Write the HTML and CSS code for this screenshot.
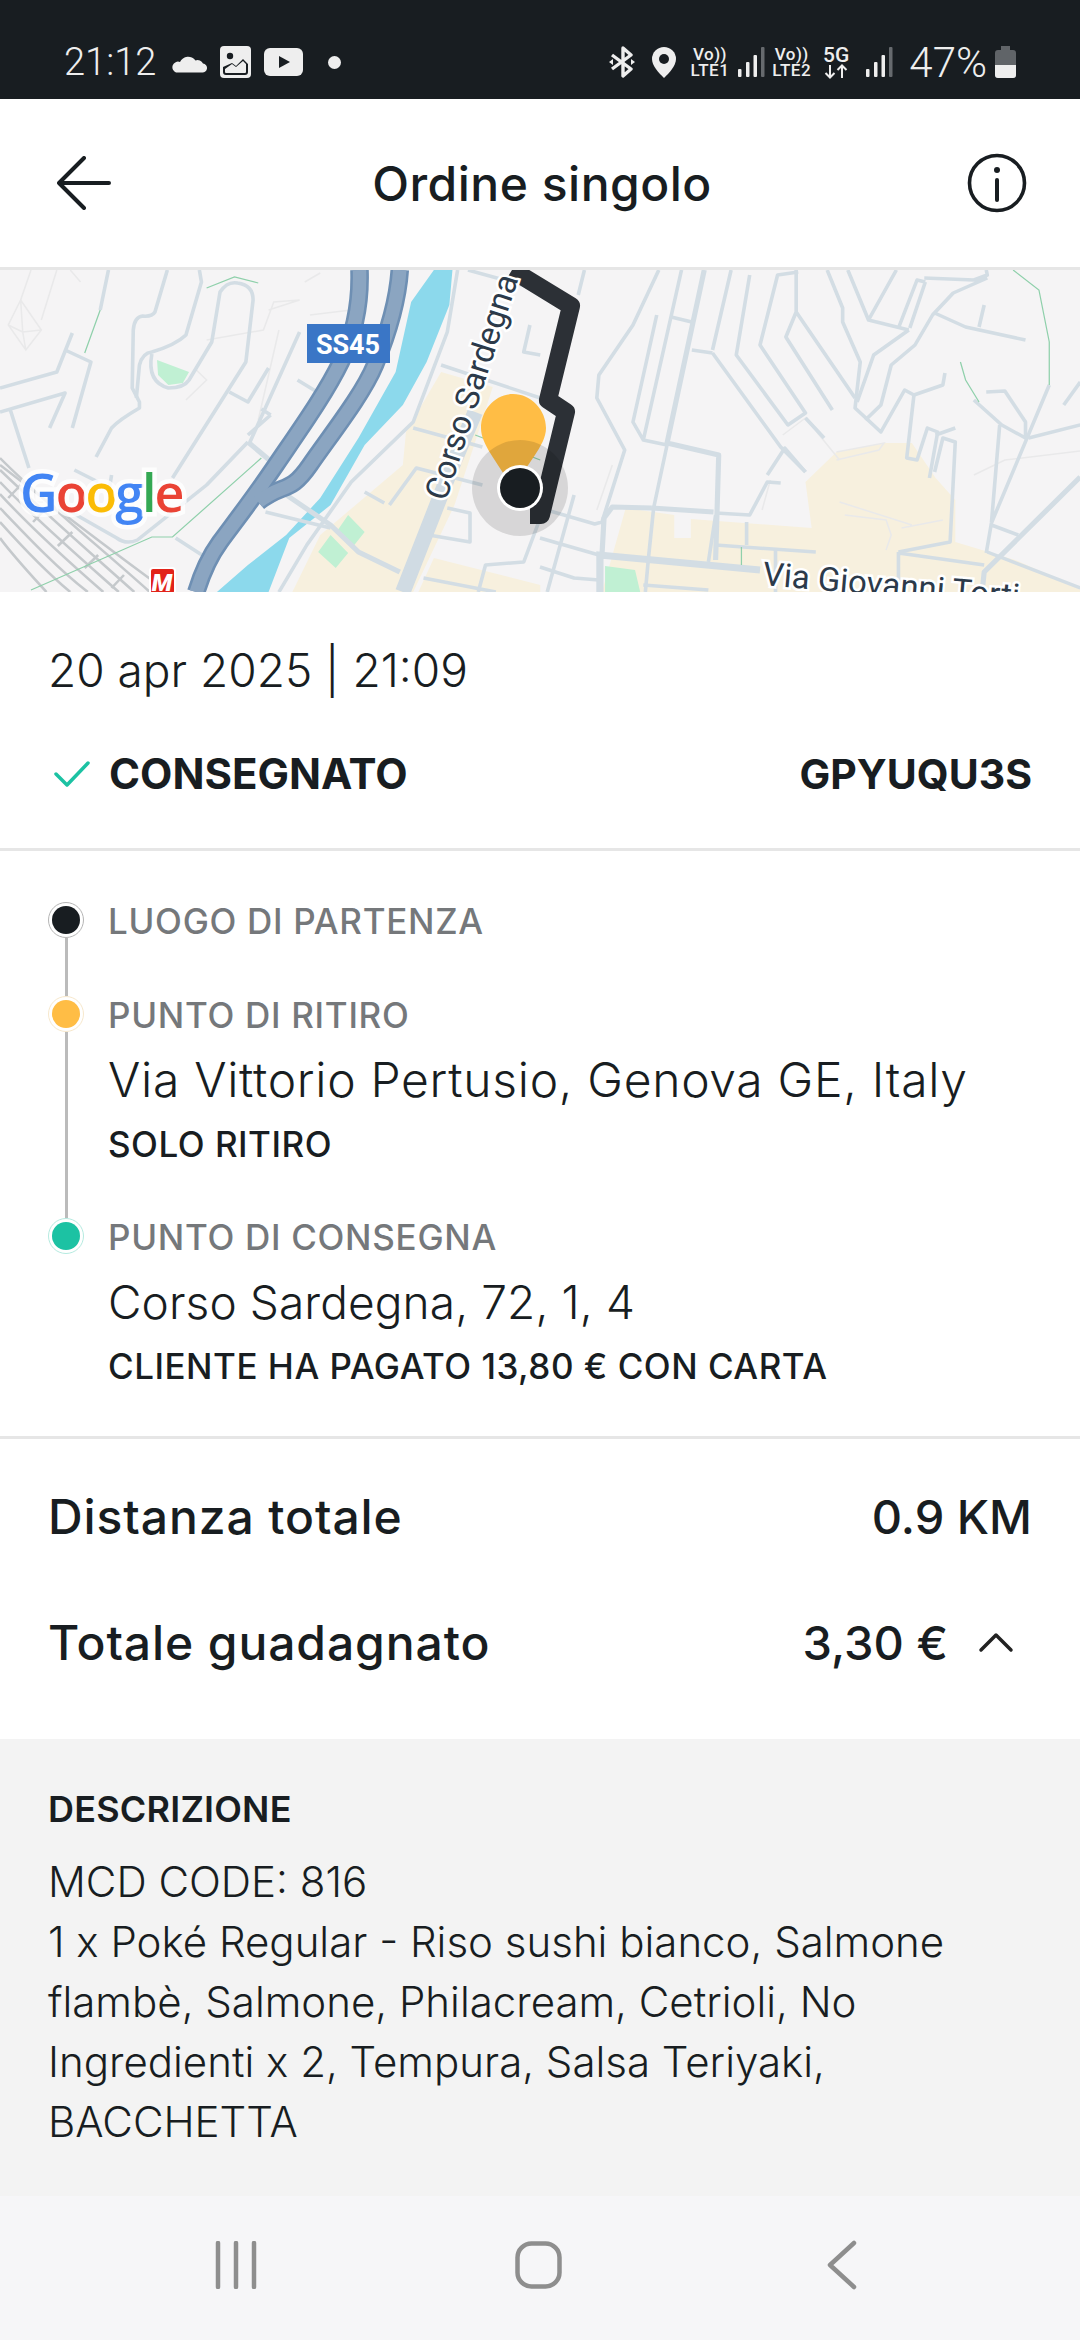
FILE: index.html
```html
<!DOCTYPE html>
<html lang="it">
<head>
<meta charset="UTF-8">
<meta name="viewport" content="width=device-width, initial-scale=1.0">
<title>Ordine singolo</title>
<link rel="stylesheet" href="styles.css">
</head>
<body>

<div class="status-bar">
  <div class="status-left">
    <span class="clock">21:12</span>
    <svg class="ic-cloud" width="37" height="22" viewBox="0 0 37 22"><path fill="#eee" d="M6 21.500H32a4.500 4.500 0 0 0 1-9 a6 6 0 0 0-7.500-3 a9 9 0 0 0-15.500 1.500 a5.500 5.500 0 0 0-4 10.500z"/></svg>
    <svg class="ic-image" width="31" height="32" viewBox="0 0 31 32"><rect width="31" height="32" rx="4" fill="#eee"/><circle cx="10" cy="10" r="3.200" fill="#181d21"/><path d="M3 21v5a3 3 0 0 0 3 3h19a3 3 0 0 0 3-3v-8l-5-5-7 7-4-3z" fill="#181d21"/><path d="M5 23l7-5 4 3 7-6 3 3v8a1 1 0 0 1-1 1H6a1 1 0 0 1-1-1z" fill="#eee"/></svg>
    <svg class="ic-yt" width="39" height="28" viewBox="0 0 39 28"><rect width="39" height="28" rx="6" fill="#eee"/><path d="M15 8l11 6-11 6z" fill="#181d21"/></svg>
    <span class="status-dot"></span>
  </div>
  <div class="status-right">
    <svg class="ic-bt" width="26" height="32" viewBox="0 0 26 32"><path d="M3 9l19 14-8 7V2l8 7L3 23" fill="none" stroke="#eee" stroke-width="3.400" stroke-linejoin="round"/><path d="M0 16l4-3v6zM26 16l-4-3v6z" fill="#eee"/></svg>
    <svg class="ic-loc" width="24" height="31" viewBox="0 0 24 31"><path d="M12 0a12 12 0 0 1 12 12c0 7-7 14-12 19C7 26 0 19 0 12A12 12 0 0 1 12 0z" fill="#eee"/><circle cx="12" cy="12" r="5" fill="#181d21"/></svg>
    <span class="volte"><span>Vo))</span><span>LTE1</span></span>
    <svg class="ic-signal" width="27" height="30" viewBox="0 0 27 30"><rect x="0" y="22" width="3.500" height="8" rx="1" fill="#eee"/><rect x="8" y="15" width="3.500" height="15" rx="1" fill="#eee"/><rect x="15.500" y="8" width="3.500" height="22" rx="1" fill="#eee"/><rect x="23" y="0" width="3.500" height="30" rx="1" fill="#666a6e"/></svg>
    <span class="volte volte-two"><span>Vo))</span><span>LTE2</span></span>
    <span class="volte five-g"><span>5G</span><svg width="24" height="15" viewBox="0 0 24 15"><path d="M6 1v12M1.500 9L6 13.500 10.500 9M18 14V2M13.500 6L18 1.500 22.500 6" fill="none" stroke="#eee" stroke-width="2"/></svg></span>
    <svg class="ic-signal ic-signal-two" width="27" height="30" viewBox="0 0 27 30"><rect x="0" y="22" width="3.500" height="8" rx="1" fill="#eee"/><rect x="8" y="15" width="3.500" height="15" rx="1" fill="#eee"/><rect x="15.500" y="8" width="3.500" height="22" rx="1" fill="#eee"/><rect x="23" y="0" width="3.500" height="30" rx="1" fill="#666a6e"/></svg>
    <span class="battery-text">47%</span>
    <svg class="ic-battery" width="21" height="32" viewBox="0 0 21 32"><path d="M6 0h9v4h3a3 3 0 0 1 3 3v22a3 3 0 0 1-3 3H3a3 3 0 0 1-3-3V7a3 3 0 0 1 3-3h3z" fill="#606468"/><path d="M0 19h21v10a3 3 0 0 1-3 3H3a3 3 0 0 1-3-3z" fill="#eee"/></svg>
  </div>
</div>

<header class="top-bar">
  <svg class="back" width="54" height="54" viewBox="0 0 54 54"><path d="M2 27h50M27 2L2 27l25 25" fill="none" stroke="#181d21" stroke-width="4" stroke-linecap="round" stroke-linejoin="round"/></svg>
  <h1>Ordine singolo</h1>
  <svg class="info" width="60" height="60" viewBox="0 0 60 60"><circle cx="30" cy="30" r="27.500" fill="none" stroke="#181d21" stroke-width="3.600"/><path d="M30 27v20" stroke="#181d21" stroke-width="4" stroke-linecap="round"/><circle cx="30" cy="17" r="3" fill="#181d21"/></svg>
</header>

<div class="map">
  <svg width="1080" height="322" viewBox="0 0 1080 322">
    <rect width="1080" height="322" fill="#f5f4f5"/>

    <!-- left half, coordinates taken from the crop -->
    <g transform="scale(1.033 1)">
      <path class="beige" d="M427 102L477 117 460 172 440 235 400 322H283L310 265 390 195 393 162zM420 288L523 315V322H405z"/>
      <path class="park" d="M152 90L183 102 177 113 163 115 153 105zM337 245L353 262 343 275 327 260zM320 265L337 283 325 298 308 282z"/>
      <path class="river" d="M420 0H438L435 35 413 92 390 135 353 175 320 235 280 268 260 322H210L240 295 277 265 310 228 347 168 383 102 398 32z"/>

      <g class="rail">
        <path d="M0 188C40 230 100 280 145 322"/>
        <path d="M0 200C40 240 90 285 130 322"/>
        <path d="M0 212C35 250 80 290 115 322"/>
        <path d="M0 224C30 258 70 295 100 322"/>
        <path d="M0 238C25 265 55 298 85 322"/>
        <path d="M0 252C20 275 45 302 68 322"/>
        <path d="M0 268C12 285 30 305 45 322"/>
        <path d="M0 195C50 235 120 290 160 320"/>
        <path d="M20 215L8 228M45 238L32 252M70 262L56 276M95 285L82 298M120 305L108 318"/>
      </g>

      <g class="faint">
        <path d="M8 55L20 30 40 60 25 80zM22 62L40 60M22 62L20 30M22 62L8 55M22 62L25 80"/>
        <path d="M30 0L20 30M55 0L40 50"/>
        <path d="M260 40L290 30 265 32 255 60 200 70M180 130L200 110 190 100M270 60L250 150M300 45L340 40"/>
        <path d="M310 3L295 12M78 12L68 0"/>
      </g>

      <g class="road">
        <path d="M162 0L150 42Q147 47 138 46 130 47 129 60L128 118 135 132 135 138Q115 150 108 158L93 187"/>
        <path d="M193 0L195 12 180 65Q170 75 147 82 138 83 135 95L132 128"/>
        <path d="M147 84Q142 112 163 118 178 118 183 110L205 72 213 22Q220 11 230 13 245 15 245 30L238 92 167 208"/>
        <path d="M0 118L55 102 70 63M63 80L88 92 70 158M0 142L63 123 48 158M10 140L28 198"/>
        <path d="M240 172L200 215 133 270Q122 275 113 268L57 235"/>
        <path d="M290 62L242 172M260 98L240 132 222 122M288 110L307 122M253 139L262 145M262 145L240 165"/>
        <path d="M443 0L433 62 400 152 340 212 297 275 270 322"/>
        <path d="M427 95L523 128M400 158L467 177M353 222L372 233M377 235L403 198 467 215"/>
        <path d="M257 242L320 258M170 268L200 288M433 238L455 243 455 272 415 265M410 308L480 322M523 248L507 292 470 295 463 322M453 0L523 20M523 85L507 82 513 55"/>
        <path d="M105 0L97 40M72 200L95 212M108 205L106 218"/>
      </g>
      <g class="road-wide">
        <path d="M240 172L263 192M273 222L320 255 347 282 387 302"/>
      </g>
      <path class="road-main" d="M460 142L437 198 390 322"/>

      <g class="green">
        <path d="M30 320L147 267 167 267 253 188M200 18L227 7 250 13M97 40L82 83M460 165L523 190"/>
      </g>

      <g class="highway">
        <path d="M348 0C349 30 345 60 330 92S290 160 267 195 225 255 213 272 195 305 190 322"/>
        <path d="M387 0C385 30 375 65 363 95S320 165 300 195 275 212 250 232"/>
      </g>
      <g class="highway-top">
        <path d="M348 0C349 30 345 60 330 92S290 160 267 195 225 255 213 272 195 305 190 322"/>
        <path d="M387 0C385 30 375 65 363 95S320 165 300 195 275 212 250 232"/>
      </g>
    </g>

    <!-- right half -->
    <g transform="translate(540 0) scale(1.033 1) translate(-540 0)">
      <path class="beige" d="M623 238L670 245V268H686V249L803 258 797 212 827 182 873 173 900 173 923 208 942 230 942 272 1000 290 1070 322H600z"/>
      <path class="park" d="M603 296L632 300 637 322H603z"/>
      <g class="faint">
        <path d="M827 182L873 173 868 180 827 190M830 232L900 255M835 245L875 250 880 265 875 280M930 250L890 258M775 165L797 148 830 190M960 205L990 190 1070 180M610 195L595 240M763 210L755 240"/>
      </g>
      <g class="road">
        <path d="M677 0L640 170 663 175M653 45L630 152 640 170"/>
        <path d="M655 0L630 55 597 105 595 128 622 180 600 252 593 254 540 238"/>
        <path d="M663 175L650 238 645 288 642 322"/>
        <path d="M667 47L687 52M687 80L707 83M707 83L773 177 797 202M725 0L707 80"/>
        <path d="M743 5L730 85 780 155 797 143 753 75 770 5 790 2"/>
        <path d="M788 0L788 42 778 67 823 140M788 42L845 128M797 148L815 168"/>
        <path d="M818 0L833 38 833 52 850 92 845 138 870 162 893 120 902 125 895 188 905 190 915 158 925 162 917 208"/>
        <path d="M838 0L858 50 897 60M885 0L858 50M897 60L863 85 847 132"/>
        <path d="M913 12L905 10 887 58M913 12L898 58"/>
        <path d="M912 8L960 10 973 5 972 0M973 8L940 23 920 45 903 75 880 95 870 135 855 150"/>
        <path d="M922 43L952 57 1010 70M970 35L965 57M902 125L930 115 932 103"/>
        <path d="M972 122L990 121 1010 152 1010 168 987 155 960 130"/>
        <path d="M1033 115L977 253M1013 168L1063 155M985 155L977 253 972 283M977 255L1003 265"/>
        <path d="M1047 135L1063 112"/>
        <path d="M887 282L937 272 942 172 930 168 922 202M923 165L942 158"/>
        <path d="M887 283L970 295M973 282L1063 318M887 282V322"/>
        <path d="M710 275L807 282M740 252V275M710 243L743 245 760 212 773 213M760 205L777 178 797 202"/>
        <path d="M540 268L597 285M573 225L547 322M540 297L573 308 597 310M640 315L703 320M703 292L710 245M583 0L577 25M768 280V322"/>
      </g>
      <g class="road-wide">
        <path d="M699 0L663 173 713 185 710 290M648 238L708 242M648 238L610 237 602 248 600 285M1063 207L970 302 968 322"/>
      </g>
      <path class="road-wider" d="M598 322V285L753 300"/>
      <g class="green">
        <path d="M998 0L1023 20 1033 72 1033 115M947 92L952 110 965 132M735 277V295"/>
      </g>
    </g>

    <path class="route" d="M512 0L571 36 548 130 566 142 541 245 530 245"/>

    <text class="map-label" transform="translate(446 232) rotate(-72)">Corso Sardegna</text>
    <text class="map-label" transform="translate(762 315) rotate(5)">Via Giovanni Torti</text>

    <rect x="307" y="54" width="83" height="39" fill="#3a76c6"/>
    <text class="shield" x="348" y="84">SS45</text>

    <text class="google" x="20" y="242" letter-spacing="-2"><tspan fill="#4285f4">G</tspan><tspan fill="#ea4335">o</tspan><tspan fill="#fbbc05">o</tspan><tspan fill="#4285f4">g</tspan><tspan fill="#34a853">l</tspan><tspan fill="#ea4335">e</tspan></text>

    <rect x="150" y="298" width="25" height="26" rx="3" fill="#e2231a" stroke="#fff" stroke-width="2"/>
    <text class="metro" x="162" y="321">M</text>

    <path d="M513 124C495 124 481 140 481 158 481 176 500 194 513 220 526 194 546 176 546 158 546 140 531 124 513 124z" fill="#ffbd45"/>
    <circle cx="520" cy="218" r="48" fill="#000" fill-opacity=".12"/>
    <circle cx="520" cy="218" r="23" fill="#fff"/>
    <circle cx="520" cy="218" r="20" fill="#181d21"/>
  </svg>
</div>

<section class="summary">
  <div class="date">20 apr 2025 | 21:09</div>
  <div class="status-row">
    <div class="delivered">
      <svg width="36" height="26" viewBox="0 0 36 26"><path d="M2 13l11 11L34 2" fill="none" stroke="#1cc2a3" stroke-width="3.500" stroke-linecap="round" stroke-linejoin="round"/></svg>
      <span>CONSEGNATO</span>
    </div>
    <span class="code">GPYUQU3S</span>
  </div>
</section>

<section class="stops">
  <div class="stop stop-first">
    <div class="rail-col"><span class="dot dot-black"></span><span class="connector"></span></div>
    <div class="stop-text"><div class="stop-label">LUOGO DI PARTENZA</div></div>
  </div>
  <div class="stop stop-mid">
    <div class="rail-col"><span class="dot dot-yellow"></span><span class="connector"></span></div>
    <div class="stop-text">
      <div class="stop-label">PUNTO DI RITIRO</div>
      <div class="stop-address">Via Vittorio Pertusio, Genova GE, Italy</div>
      <div class="stop-note">SOLO RITIRO</div>
    </div>
  </div>
  <div class="stop">
    <div class="rail-col"><span class="dot dot-green"></span></div>
    <div class="stop-text">
      <div class="stop-label">PUNTO DI CONSEGNA</div>
      <div class="stop-address stop-address-short">Corso Sardegna, 72, 1, 4</div>
      <div class="stop-note">CLIENTE HA PAGATO 13,80 € CON CARTA</div>
    </div>
  </div>
</section>

<section class="totals">
  <div class="total-row">
    <span>Distanza totale</span>
    <span class="total-value">0.9 KM</span>
  </div>
  <div class="total-row">
    <span>Totale guadagnato</span>
    <span class="total-value">3,30 €
      <svg class="chevron" width="36" height="22" viewBox="0 0 36 22"><path d="M3 19L18 4l15 15" fill="none" stroke="#222" stroke-width="3.500" stroke-linecap="round" stroke-linejoin="round"/></svg>
    </span>
  </div>
</section>

<section class="description">
  <h2>DESCRIZIONE</h2>
  <p>MCD CODE: 816<br>1 x Poké Regular - Riso sushi bianco, Salmone flambè, Salmone, Philacream, Cetrioli, No Ingredienti x 2, Tempura, Salsa Teriyaki, BACCHETTA</p>
</section>

<nav class="nav-bar">
  <svg width="42" height="48" viewBox="0 0 42 48"><path d="M3 2v44M21 2v44M39 2v44" stroke="#8e8e8e" stroke-width="4.500" stroke-linecap="round"/></svg>
  <svg class="nav-home" width="47" height="48" viewBox="0 0 47 48"><rect x="2.500" y="2.500" width="42" height="43" rx="14" fill="none" stroke="#8e8e8e" stroke-width="4.500"/></svg>
  <svg width="30" height="50" viewBox="0 0 30 50"><path d="M27 3L3 25l24 22" fill="none" stroke="#8e8e8e" stroke-width="4.500" stroke-linecap="round" stroke-linejoin="round"/></svg>
</nav>

</body>
</html>
```

FILE: styles.css
```css
* {
  box-sizing: border-box;
}

body {
  font-family: Inter, Arial, sans-serif;
  color: #181d21;
  background-color: #fff;
  margin: 0;
  width: 1080px;
  height: 2340px;
  overflow: hidden;
}

/* status bar */
.status-bar {
  height: 99px;
  background-color: #181d21;
  color: #eee;
  display: flex;
  justify-content: space-between;
  align-items: center;
  padding: 25px 64px 0 64px;
  font-family: Roboto, Arial, sans-serif;
}

.status-left,
.status-right {
  display: flex;
  align-items: center;
}

.clock {
  font-size: 38px;
  font-weight: 300;
  margin-right: 14px;
}

.ic-image {
  margin-left: 13px;
}

.ic-yt {
  margin-left: 13px;
}

.status-dot {
  width: 13px;
  height: 13px;
  border-radius: 50%;
  background-color: #eee;
  margin-left: 25px;
}

.ic-loc {
  margin-left: 17px;
}

.volte {
  display: flex;
  flex-direction: column;
  align-items: center;
  font-size: 17px;
  letter-spacing: .5px;
  line-height: 16px;
  font-weight: 500;
  margin-left: 15px;
}

.ic-signal {
  margin-left: 9px;
}

.volte-two {
  margin-left: 7px;
}

.five-g {
  font-size: 21px;
  letter-spacing: 0;
  line-height: 18px;
  margin-left: 12px;
}

.ic-signal-two {
  margin-left: 17px;
}

.battery-text {
  font-size: 42px;
  font-weight: 300;
  margin-left: 16px;
  margin-right: 8px;
}

/* header */
.top-bar {
  height: 171px;
  border-bottom: 3px solid #e6e6e6;
  display: grid;
  grid-template-columns: 1fr auto 1fr;
  align-items: center;
  padding: 0 53px 0 57px;
}

.top-bar h1 {
  font-size: 48px;
  font-weight: 500;
  letter-spacing: .5px;
  margin: 0;
}

.back {
  justify-self: start;
}

.info {
  justify-self: end;
}

/* map */
.map {
  height: 322px;
  overflow: hidden;
}

.map svg {
  display: block;
}

.beige {
  fill: #f7f0de;
}

.park {
  fill: #c0f0d3;
}

.river {
  fill: #8cd9ec;
}

.rail path {
  fill: none;
  stroke: #c5c9cc;
  stroke-width: 2.500;
}

.faint path {
  fill: none;
  stroke: #e9e9ea;
  stroke-width: 1.500;
}

.road path {
  fill: none;
  stroke: #d3dde4;
  stroke-width: 3.500;
  stroke-linejoin: round;
}

.road-wide path {
  fill: none;
  stroke: #d3dde4;
  stroke-width: 5;
  stroke-linejoin: round;
}

.road-wider {
  fill: none;
  stroke: #d3dde4;
  stroke-width: 7;
}

.road-main {
  fill: none;
  stroke: #d0dbe3;
  stroke-width: 15;
}

.green path {
  fill: none;
  stroke: #8fd0ab;
  stroke-width: 1.200;
}

.highway path {
  fill: none;
  stroke: #6e8fb3;
  stroke-width: 18;
  stroke-linejoin: round;
}

.highway-top path {
  fill: none;
  stroke: #8ba5c1;
  stroke-width: 13;
  stroke-linejoin: round;
}

.route {
  fill: none;
  stroke: #2c3036;
  stroke-width: 18;
  stroke-linejoin: round;
}

.map-label {
  font-family: Roboto, Arial, sans-serif;
  font-size: 33px;
  fill: #2c3a4a;
  stroke: #fff;
  stroke-width: 5px;
  paint-order: stroke;
}

.shield {
  font-family: Roboto, Arial, sans-serif;
  font-size: 27px;
  font-weight: 700;
  fill: #fff;
  text-anchor: middle;
}

.google {
  font-family: "Open Sans", Arial, sans-serif;
  font-size: 52px;
  font-weight: 600;
  stroke: #fff;
  stroke-opacity: .8;
  stroke-width: 9px;
  paint-order: stroke;
}

.metro {
  font-family: Roboto, Arial, sans-serif;
  font-size: 24px;
  font-weight: 900;
  font-style: italic;
  fill: #fff;
  text-anchor: middle;
}

/* date and status */
.summary {
  height: 259px;
  border-bottom: 3px solid #e6e6e6;
  padding: 46px 48px 0;
}

.date {
  font-size: 46px;
  font-weight: 300;
  line-height: 64px;
}

.status-row {
  display: flex;
  justify-content: space-between;
  align-items: center;
  font-size: 42px;
  font-weight: 700;
  line-height: 50px;
  margin-top: 47px;
}

.code {
  font-size: 41px;
}

.delivered {
  display: flex;
  align-items: center;
  gap: 19px;
  padding-left: 6px;
}

/* timeline */
.stops {
  height: 588px;
  border-bottom: 3px solid #e6e6e6;
  padding: 51px 48px 0;
}

.stop {
  display: flex;
  gap: 24px;
}

.stop-first {
  height: 94px;
}

.stop-mid {
  height: 222px;
}

.rail-col {
  width: 36px;
  flex-shrink: 0;
  display: flex;
  flex-direction: column;
  align-items: center;
}

.dot {
  width: 36px;
  height: 36px;
  flex-shrink: 0;
  border-radius: 50%;
  border: 1px solid;
  background-clip: content-box;
  padding: 3px;
}

.dot-black {
  background-color: #181d21;
  border-color: #b5b5b5;
}

.dot-yellow {
  background-color: #ffbd45;
  border-color: #f7e8cc;
}

.dot-green {
  background-color: #1cc2a3;
  border-color: #b5ebe0;
}

.connector {
  width: 3px;
  flex: 1;
  background-color: #bbb;
}

.stop-label {
  font-size: 35px;
  font-weight: 500;
  letter-spacing: .7px;
  line-height: 38px;
  color: #75787b;
}

.stop-address {
  font-size: 48px;
  font-weight: 300;
  letter-spacing: .7px;
  line-height: 60px;
  margin-top: 16px;
}

.stop-address-short {
  font-size: 46px;
  letter-spacing: .1px;
}

.stop-note {
  font-size: 35px;
  font-weight: 500;
  letter-spacing: .5px;
  line-height: 40px;
  margin-top: 14px;
}

/* totals */
.totals {
  height: 300px;
  padding: 14px 48px 0;
}

.total-row {
  height: 126px;
  display: flex;
  justify-content: space-between;
  align-items: center;
  font-size: 48px;
  font-weight: 500;
  letter-spacing: .9px;
}

.total-value {
  display: flex;
  align-items: center;
  font-size: 47px;
  letter-spacing: 0;
}

.chevron {
  margin-left: 30px;
  margin-right: 18px;
}

/* description */
.description {
  height: 457px;
  background-color: #f3f3f3;
  padding: 50px 120px 0 48px;
}

.description h2 {
  font-size: 36px;
  font-weight: 600;
  letter-spacing: .2px;
  line-height: 40px;
  margin: 0;
}

.description p {
  font-size: 42px;
  font-weight: 300;
  line-height: 60px;
  margin: 23px 0 0;
}

/* android nav */
.nav-bar {
  height: 144px;
  background-color: #f6f6f8;
  display: flex;
  align-items: center;
  justify-content: space-between;
  padding: 0 223px 6px 215px;
}

.nav-home {
  margin-right: 8px;
}
```
